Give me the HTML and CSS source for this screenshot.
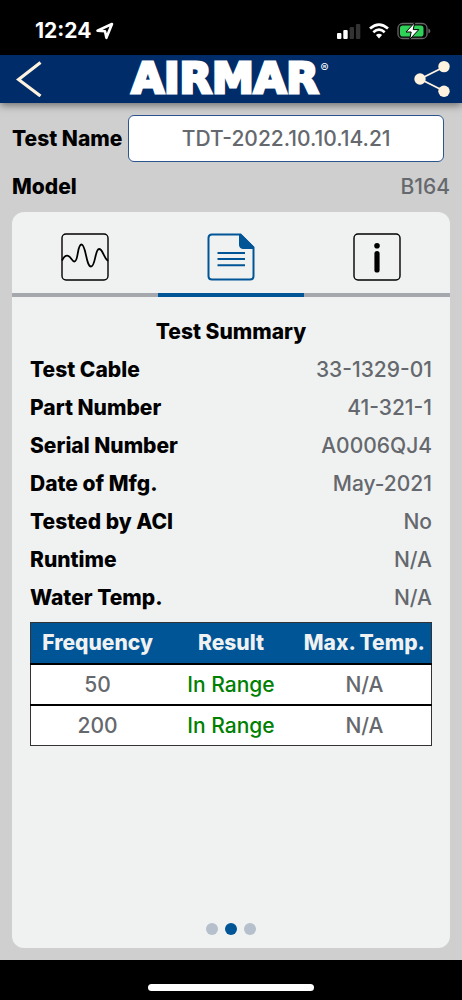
FILE: index.html
```html
<!DOCTYPE html>
<html lang="en">
<head>
    <meta charset="UTF-8">
    <meta name="viewport" content="width=device-width, initial-scale=1">
    <title>Test Summary</title>
    <link rel="stylesheet" href="styles.css">
</head>
<body>
    <div class="status-bar">
        <div class="clock">
            <span>12:24</span>
            <svg width="18" height="18" viewBox="0 0 18 18" fill="none" stroke="#fff" stroke-width="2.6" stroke-linejoin="round">
                <path d="M1.500 8.600 L16 2 L10.400 15.800 L9 9.200 Z"/>
            </svg>
        </div>
        <div class="indicators">
            <svg width="24" height="16" viewBox="0 0 24 16">
                <rect x="0" y="10" width="4.4" height="6" rx="1" fill="#fff"/>
                <rect x="6.3" y="7" width="4.4" height="9" rx="1" fill="#fff"/>
                <rect x="12.6" y="4" width="4.4" height="12" rx="1" fill="#333"/>
                <rect x="18.9" y="1" width="4.4" height="15" rx="1" fill="#333"/>
            </svg>
            <svg width="20" height="16" viewBox="0 0 20 16" fill="none" stroke="#fff" stroke-width="2.7">
                <path d="M1 5.6 Q10 -2.2 19 5.6"/>
                <path d="M4.3 9.2 Q10 4.2 15.7 9.2"/>
                <path d="M6.9 12 Q10 9.5 13.1 12 L10 15.4 Z" fill="#fff" stroke="none"/>
            </svg>
            <svg width="34" height="18" viewBox="0 0 34 18">
                <rect x="1" y="1.500" width="29" height="15" rx="4.600" fill="none" stroke="#666" stroke-width="1.3"/>
                <path d="M31.400 6.400 Q33.400 7.200 33.400 9 Q33.400 10.800 31.400 11.600 Z" fill="#666"/>
                <rect x="3" y="3.500" width="23.500" height="11" rx="2.800" fill="#30d158"/>
                <path d="M17.800 .5 L9 10 H14.200 L12.600 17.500 L21.800 7.600 H16.200 Z" fill="#fff" stroke="#000" stroke-width="1"/>
            </svg>
        </div>
    </div>

    <header class="header">
        <button class="icon-btn" aria-label="Back">
            <svg width="26" height="36" viewBox="0 0 26 36" fill="none" stroke="#fff3e0" stroke-width="3.2">
                <path d="M24.500 1.500 L2.500 18.500 L24.500 35"/>
            </svg>
        </button>
        <h1 class="logo">AIRMAR<sup>®</sup></h1>
        <button class="icon-btn" aria-label="Share">
            <svg width="36" height="38" viewBox="0 0 36 38">
                <path d="M30 7 L6 19 L30 31" fill="none" stroke="#fff3e0" stroke-width="1.800"/>
                <circle cx="6" cy="19" r="5.700" fill="#fff3e0"/>
                <circle cx="30" cy="6.600" r="5.700" fill="#fff3e0"/>
                <circle cx="30" cy="31.200" r="5.700" fill="#fff3e0"/>
            </svg>
        </button>
    </header>

    <main class="content">
        <div class="name-row">
            <label for="testName">Test Name</label>
            <input type="text" id="testName" value="TDT-2022.10.10.14.21">
        </div>
        <div class="model-row">
            <span class="label">Model</span>
            <span>B164</span>
        </div>

        <section class="card">
            <nav class="tabs">
                <button class="tab" aria-label="Waveform">
                    <svg width="48" height="48" viewBox="0 0 48 48" fill="none" stroke="#000">
                        <rect x="1" y="1" width="46" height="46" rx="4" stroke-width="1.400"/>
                        <path d="M1 27.500 C3 23.500 5 22.300 7 22.800 C10 23.500 11 28.500 13.500 28.500 C17.500 28.500 16 11.500 20.500 11.500 C25 11.500 25 33.500 30 33.500 C34.500 33.500 34 16 38 16 C42 16 42 24 47 28" stroke-width="1.800"/>
                    </svg>
                </button>
                <button class="tab active" aria-label="Summary">
                    <svg width="48" height="48" viewBox="0 0 48 48" fill="none" stroke="#005596" stroke-width="2">
                        <path d="M33.500 1.500 H5 Q1.500 1.500 1.500 5 V43 Q1.500 46.500 5 46.500 H43 Q46.500 46.500 46.500 43 V14.500 Z"/>
                        <path d="M32.500 1.500 H34 L46.500 14 V15.500 H36 Q32.500 15.500 32.500 12 Z" fill="#005596" stroke-width="1"/>
                        <path d="M10.500 20 H38 M10.500 26 H38 M10.500 32.200 H38"/>
                    </svg>
                </button>
                <button class="tab" aria-label="Info">
                    <svg width="48" height="48" viewBox="0 0 48 48">
                        <rect x="1" y="1" width="46" height="46" rx="4" fill="none" stroke="#000" stroke-width="1.400"/>
                        <circle cx="24" cy="12.800" r="2.800"/>
                        <rect x="21.400" y="18" width="5.200" height="21.500" rx="2.600"/>
                    </svg>
                </button>
            </nav>

            <div class="panel">
                <h2>Test Summary</h2>
                <dl class="summary">
                    <div><dt>Test Cable</dt><dd>33-1329-01</dd></div>
                    <div><dt>Part Number</dt><dd>41-321-1</dd></div>
                    <div><dt>Serial Number</dt><dd>A0006QJ4</dd></div>
                    <div><dt>Date of Mfg.</dt><dd>May-2021</dd></div>
                    <div><dt>Tested by ACI</dt><dd>No</dd></div>
                    <div><dt>Runtime</dt><dd>N/A</dd></div>
                    <div><dt>Water Temp.</dt><dd>N/A</dd></div>
                </dl>
                <table class="results">
                    <thead>
                        <tr><th>Frequency</th><th>Result</th><th>Max. Temp.</th></tr>
                    </thead>
                    <tbody>
                        <tr><td>50</td><td class="ok">In Range</td><td>N/A</td></tr>
                        <tr><td>200</td><td class="ok">In Range</td><td>N/A</td></tr>
                    </tbody>
                </table>
            </div>

            <div class="dots">
                <span class="dot"></span>
                <span class="dot current"></span>
                <span class="dot"></span>
            </div>
        </section>
    </main>

    <footer class="home-bar"><span></span></footer>
</body>
</html>
```
FILE: styles.css
```css
* { box-sizing: border-box; }
body {
    margin: 0;
    min-height: 100vh;
    display: flex;
    flex-direction: column;
    font-family: Inter, "Liberation Sans", sans-serif;
    font-size: 21px;
    font-weight: 500;
    color: #65686d;
    background: #000;
}
button {
    padding: 0;
    border: none;
    background: none;
    cursor: pointer;
}
svg { display: block; }

.status-bar {
    height: 55px;
    padding: 6px 31px 0 35px;
    display: flex;
    justify-content: space-between;
    align-items: center;
    color: #fff;
}
.clock {
    display: flex;
    align-items: center;
    gap: 5px;
    font-weight: 700;
}
.indicators {
    display: flex;
    align-items: center;
    gap: 8px;
}

.header {
    height: 48px;
    padding: 0 12px 0 16px;
    display: flex;
    justify-content: space-between;
    align-items: center;
    background: #002d6a;
    box-shadow: 0 2px 8px rgba(0, 0, 0, 0.5);
    z-index: 1;
}
.logo {
    margin: 0;
    padding-left: 4px;
    display: flex;
    color: #fff;
    font-family: "DejaVu Sans", Inter, sans-serif;
    font-size: 42px;
    font-weight: 700;
    line-height: 50px;
    -webkit-text-stroke: 3px #fff;
}
.logo sup {
    padding-left: 2px;
    font-family: Inter, sans-serif;
    font-size: 12px;
    font-weight: 400;
    line-height: 28px;
    -webkit-text-stroke: 0;
}

.content {
    flex: 1;
    padding: 12px;
    display: flex;
    flex-direction: column;
    background: #cfcfcf;
}
.name-row {
    display: flex;
    align-items: center;
    gap: 6px;
    padding-right: 6px;
}
.name-row label, .label {
    color: #000;
    font-weight: 800;
}
.name-row input {
    flex: 1;
    min-width: 0;
    height: 47px;
    border: 1px solid #2c5590;
    border-radius: 6px;
    background: #fff;
    color: inherit;
    font: inherit;
    text-align: center;
}
.model-row {
    display: flex;
    justify-content: space-between;
    line-height: 50px;
}

.card {
    flex: 1;
    display: flex;
    flex-direction: column;
    background: #f0f2f2;
    border-radius: 12px;
}
.tabs { display: flex; }
.tab {
    flex: 1;
    height: 85px;
    padding-top: 8px;
    display: flex;
    justify-content: center;
    align-items: center;
    border-bottom: 4px solid #a5a9ad;
}
.tab.active { border-bottom-color: #005596; }

.panel {
    flex: 1;
    padding: 16px 18px;
}
.panel h2 {
    margin: 0;
    color: #000;
    font-size: 21px;
    font-weight: 800;
    line-height: 38px;
    text-align: center;
}
.summary {
    margin: 0 0 5px;
    line-height: 38px;
}
.summary div {
    display: flex;
    justify-content: space-between;
}
.summary dt {
    color: #000;
    font-weight: 800;
}
.summary dd { margin: 0; }

.results {
    width: 100%;
    table-layout: fixed;
    border-collapse: collapse;
    border: 1px solid #333;
    background: #fff;
    text-align: center;
}
.results th, .results td {
    height: 41px;
    padding: 0;
}
.results th {
    background: #005596;
    color: #f0f2f2;
    font-weight: 800;
}
.results tbody tr { border-top: 2px solid #000; }
.results .ok { color: #008000; }

.dots {
    display: flex;
    justify-content: center;
    gap: 7px;
    padding-bottom: 13px;
}
.dot {
    width: 12px;
    height: 12px;
    border-radius: 50%;
    background: #b5c0cc;
}
.dot.current { background: #005596; }

.home-bar {
    height: 40px;
    padding-top: 24px;
    display: flex;
    justify-content: center;
}
.home-bar span {
    width: 36%;
    height: 7px;
    border-radius: 4px;
    background: #fff;
}
```
